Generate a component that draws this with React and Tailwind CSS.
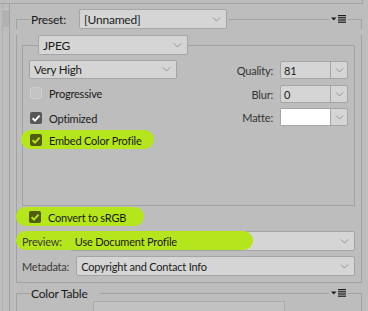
const LINE = 'border-[#a2a2a2]'

function Chevron() {
  return (
    <svg width="9" height="5" viewBox="0 0 9 5" className="shrink-0">
      <path d="M1 0.5 L4.5 4 L8 0.5" fill="none" stroke="#939393" strokeWidth="1" />
    </svg>
  )
}

function MenuIcon() {
  return (
    <svg width="15" height="8" viewBox="0 0 15 8" className="shrink-0">
      <path d="M0 2.5 H5.5 L2.75 5.5 Z" fill="#1c1c1c" />
      <rect x="7" y="0" width="8" height="1.2" fill="#1c1c1c" />
      <rect x="7" y="2.2" width="8" height="1.2" fill="#1c1c1c" />
      <rect x="7" y="4.4" width="8" height="1.2" fill="#1c1c1c" />
      <rect x="7" y="6.6" width="8" height="1.2" fill="#1c1c1c" />
    </svg>
  )
}

function Check({ color = '#ffffff' }) {
  return (
    <svg width="12" height="12" viewBox="0 0 12 12">
      <path d="M2.6 6.2 L5 8.6 L9.6 3.6" fill="none" stroke={color} strokeWidth="2" />
    </svg>
  )
}

function Dropdown({ children, className = '', textClass = '' }) {
  return (
    <div className={`relative flex items-center rounded-[2px] border border-[#a5a5a5] bg-[#d5d5d5] pl-[4px] pr-[5px] ${className}`}>
      <span className={`relative z-20 flex-1 whitespace-nowrap leading-[15px] text-[#1a1a1a] ${textClass}`}>{children}</span>
      <Chevron />
    </div>
  )
}

function Field({ value, white }) {
  return (
    <div className="flex h-[18px] w-[68px] rounded-[2px] border border-[#a5a5a5] bg-[#d5d5d5]">
      <div className={`flex w-[49px] items-center pl-[3px] ${white ? 'bg-white' : ''} text-[#1a1a1a]`}>{value}</div>
      <div className="flex flex-1 items-center justify-center border-l border-[#a5a5a5]">
        <Chevron />
      </div>
    </div>
  )
}

function ValueRow({ label, value, white, className = '' }) {
  return (
    <div className={`flex items-center justify-end gap-[7px] ${className}`}>
      <span className="text-[#333]">{label}</span>
      <Field value={value} white={white} />
    </div>
  )
}

function Checkbox({ checked, lime }) {
  if (!checked) {
    return <div className="h-[12px] w-[12px] rounded-[2px] border border-[#cdcdcd] bg-[#c3c3c3]" />
  }
  return (
    <div className={`flex h-[12px] w-[12px] items-center justify-center rounded-[2px] ${lime ? 'bg-[#4f5d0c]' : 'bg-[#575757]'}`}>
      <Check color={lime ? '#b5e61d' : '#ffffff'} />
    </div>
  )
}

export default function App() {
  return (
    <div
      className="h-[311px] w-[368px] overflow-hidden bg-[#bdbdbd] text-[11px] leading-[15px] tracking-[-0.2px] text-[#1a1a1a]"
      style={{ fontFamily: 'Lato, "Liberation Sans", Arial, sans-serif' }}
    >
      {/* top edge of the panel above */}
      <div className={`h-[4px] w-[363px] border-b border-r ${LINE}`} />

      <div className="flex">
        {/* left strip */}
        <div className="flex w-[16px] shrink-0">
          <div className={`ml-[2px] flex w-[8px] flex-col border-l border-r border-l-[#b0b0b0] ${LINE}`}>
            <div className="mt-[5px] h-[18px] border-t border-[#c8c8c8] bg-[#b2b2b2]" />
          </div>
        </div>

        <div className="w-[346px] shrink-0">
          {/* Preset group */}
          <div className="mt-[5px]">
            <div className="flex h-[20px]">
              <div className={`h-[10px] w-[14px] self-end border-l border-t ${LINE}`} />
              <div className="flex w-[49px] items-center pl-[1px] text-[12px]">Preset:</div>
              <Dropdown className="w-[148px]" textClass="text-[12px]">[Unnamed]</Dropdown>
              <div className={`ml-[2px] h-[10px] flex-1 self-end border-t ${LINE}`} />
              <div className="flex w-[19px] items-center justify-center">
                <MenuIcon />
              </div>
              <div className={`h-[10px] w-[14px] self-end border-r border-t ${LINE}`} />
            </div>

            <div className={`border-b border-l border-r pb-[6px] pl-[5px] pr-[6px] ${LINE}`}>
              {/* JPEG group */}
              <div className="mt-[6px]">
                <div className="flex h-[20px]">
                  <div className={`h-[10px] w-[16px] self-end border-l border-t ${LINE}`} />
                  <Dropdown className="w-[150px]" textClass="text-[12px]">JPEG</Dropdown>
                  <div className={`h-[10px] flex-1 self-end border-r border-t ${LINE}`} />
                </div>
                <div className={`flex border-b border-l border-r pb-[58px] pl-[6px] pr-[6px] pt-[5px] ${LINE}`}>
                  <div className="w-[148px] shrink-0">
                    <Dropdown className="h-[19px]" textClass="text-[11.5px]">Very High</Dropdown>
                    <div className="ml-[1px] mt-[7px] flex h-[14px] items-center gap-[7px]">
                      <Checkbox />
                      <span>Progressive</span>
                    </div>
                    <div className="ml-[1px] mt-[11px] flex h-[14px] items-center gap-[7px]">
                      <Checkbox checked />
                      <span>Optimized</span>
                    </div>
                    <div className="relative ml-[1px] mt-[8px] flex h-[14px] items-center gap-[7px]">
                      <div className="absolute left-[-9px] top-[-3px] z-10 h-[19px] w-[133px] rounded-full bg-[#b5e61d]" />
                      <div className="relative z-20">
                        <Checkbox checked lime />
                      </div>
                      <span className="relative z-20">Embed Color Profile</span>
                    </div>
                  </div>
                  <div className="flex-1 pt-[1px]">
                    <ValueRow label="Quality:" value="81" />
                    <ValueRow label="Blur:" value="0" className="mt-[6px]" />
                    <ValueRow label="Matte:" value="" white className="mt-[5px]" />
                  </div>
                </div>
              </div>

              <div className="relative ml-[7px] mt-[4px] flex h-[14px] items-center gap-[7px]">
                <div className="absolute left-[-13px] top-[-3px] z-10 h-[19px] w-[128px] rounded-full bg-[#b5e61d]" />
                <div className="relative z-20">
                  <Checkbox checked lime />
                </div>
                <span className="relative z-20">Convert to sRGB</span>
              </div>

              <div className="relative mt-[7px] flex h-[20px] items-center gap-[8px]">
                <div className="absolute left-[-6px] top-0 z-10 h-[19px] w-[237px] rounded-full bg-[#b5e61d]" />
                <span className="relative z-20 text-[#3a3a3a]">Preview:</span>
                <Dropdown className="h-[20px] flex-1">Use Document Profile</Dropdown>
              </div>

              <div className="mt-[5px] flex h-[20px] items-center gap-[7px]">
                <span className="text-[#3a3a3a]">Metadata:</span>
                <Dropdown className="h-[20px] flex-1">Copyright and Contact Info</Dropdown>
              </div>
            </div>
          </div>

          {/* Color Table group */}
          <div className="mt-[2px]">
            <div className="flex h-[16px]">
              <div className={`h-[8px] w-[14px] self-end border-l border-t ${LINE}`} />
              <div className="flex items-center pl-[1px] pr-[4px] text-[12px]">Color Table</div>
              <div className={`ml-[8px] h-[8px] flex-1 self-end border-t ${LINE}`} />
              <div className="flex w-[19px] items-center justify-center">
                <MenuIcon />
              </div>
              <div className={`h-[8px] w-[14px] self-end border-r border-t ${LINE}`} />
            </div>
            <div className={`h-[20px] border-l border-r ${LINE}`}>
              <div className="ml-[76px] h-[20px] w-[192px] border border-[#a9a9a9] bg-[#c2c2c2]" />
            </div>
          </div>
        </div>
      </div>
    </div>
  )
}
